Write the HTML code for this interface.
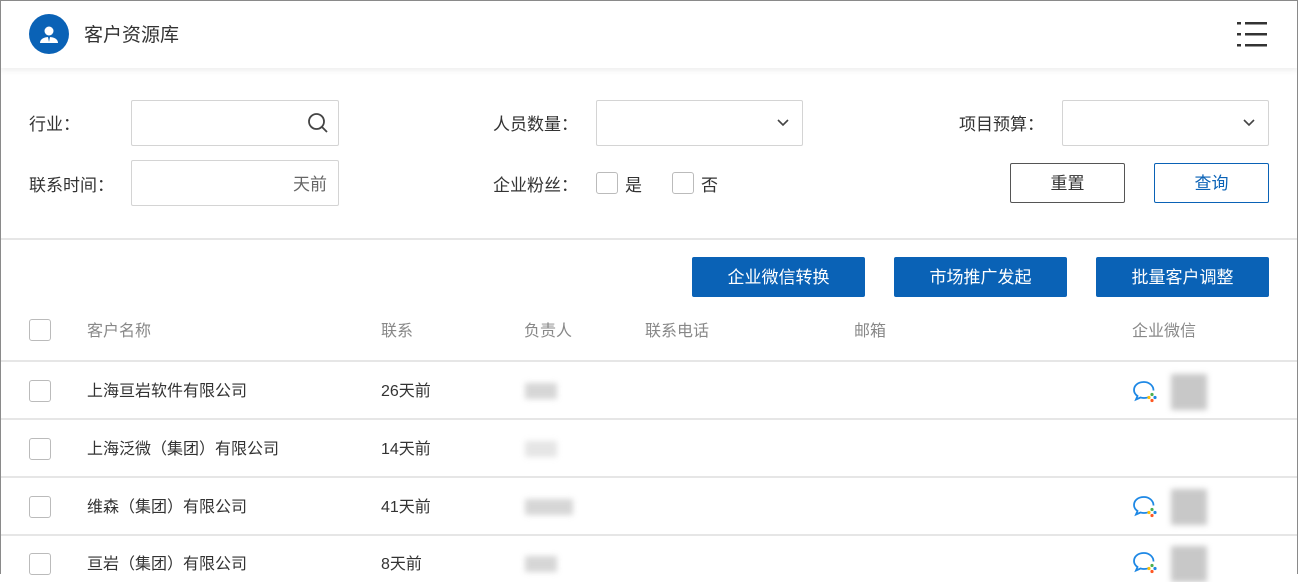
<!DOCTYPE html>
<html><head><meta charset="utf-8"><style>
*{box-sizing:border-box;margin:0;padding:0}
body{width:1298px;height:574px;overflow:hidden;background:#fff;font-family:"Liberation Sans","Noto Sans CJK SC",sans-serif;color:#333;position:relative}
.frame{position:absolute;left:0;top:0;width:1298px;height:574px;border:1px solid #8a8a8a;border-bottom:none;pointer-events:none;z-index:9}
.a{position:absolute;white-space:nowrap}
.hdr{position:absolute;left:0;top:0;width:1298px;height:68px;background:#fff;box-shadow:0 2px 6px rgba(0,0,0,.08)}
.lbl{font-size:17px;color:#333;line-height:20px}
.inp{position:absolute;border:1px solid #d4d4d4;border-radius:2px;background:#fff;height:46px}
.cb{position:absolute;width:22px;height:22px;border:1px solid #bbb;border-radius:3px;background:#fff}
.btn{position:absolute;background:#0a62b6;color:#fff;font-size:17px;text-align:center;line-height:42px;height:40px;border-radius:2px}
.th{font-size:16px;color:#888;line-height:20px}
.td{font-size:16px;color:#333;line-height:20px}
.hl{position:absolute;left:0;width:1298px;height:2px;background:#e6e6e6}
.blur{position:absolute;height:16px;background:#ccc;filter:blur(3px);opacity:.8}
.qr{position:absolute;width:36px;height:36px;background:#c8c8c8;filter:blur(3px)}
</style></head><body>
<div class="frame"></div>
<div class="hdr">
 <svg class="a" style="left:29px;top:14px" width="40" height="40" viewBox="0 0 40 40"><circle cx="20" cy="20" r="20" fill="#0a62b6"/><circle cx="20" cy="17" r="4.5" fill="#fff"/><path d="M11 29c0-4 4-6 9-6s9 2 9 6z" fill="#fff"/><path d="M19 23l1 5 1-5z" fill="#0a62b6"/></svg>
 <div class="a" style="left:84px;top:25px;font-size:19px;line-height:22px;color:#333">客户资源库</div>
 <svg class="a" style="left:1237px;top:21px" width="30" height="26" viewBox="0 0 30 26"><g fill="#333"><rect x="0" y="1" width="4" height="2.5"/><rect x="8" y="1" width="22" height="2.5"/><rect x="0" y="12" width="4" height="2.5"/><rect x="8" y="12" width="22" height="2.5"/><rect x="0" y="23" width="4" height="2.5"/><rect x="8" y="23" width="22" height="2.5"/></g></svg>
</div>

<div class="a lbl" style="left:29px;top:115px">行业：</div>
<div class="inp" style="left:131px;top:100px;width:208px"><svg class="a" style="left:175px;top:11px" width="22" height="22" viewBox="0 0 22 22"><circle cx="9.5" cy="9.5" r="7.5" fill="none" stroke="#444" stroke-width="1.8"/><path d="M15 15l5 5" stroke="#444" stroke-width="1.8"/></svg></div>
<div class="a lbl" style="left:493px;top:115px">人员数量：</div>
<div class="inp" style="left:596px;top:100px;width:207px"><svg class="a" style="left:180px;top:18px" width="12" height="8" viewBox="0 0 12 8"><path d="M1 1l5 5 5-5" fill="none" stroke="#444" stroke-width="1.6"/></svg></div>
<div class="a lbl" style="left:959px;top:115px">项目预算：</div>
<div class="inp" style="left:1062px;top:100px;width:207px"><svg class="a" style="left:180px;top:18px" width="12" height="8" viewBox="0 0 12 8"><path d="M1 1l5 5 5-5" fill="none" stroke="#444" stroke-width="1.6"/></svg></div>

<div class="a lbl" style="left:29px;top:176px">联系时间：</div>
<div class="inp" style="left:131px;top:160px;width:208px"><div class="a" style="right:11px;top:14px;font-size:17px;line-height:20px;color:#666">天前</div></div>
<div class="a lbl" style="left:493px;top:176px">企业粉丝：</div>
<div class="cb" style="left:596px;top:172px"></div><div class="a lbl" style="left:625px;top:176px">是</div>
<div class="cb" style="left:672px;top:172px"></div><div class="a lbl" style="left:701px;top:176px">否</div>
<div class="a" style="left:1010px;top:163px;width:115px;height:40px;border:1px solid #555;border-radius:2px;text-align:center;line-height:40px;font-size:17px;color:#333">重置</div>
<div class="a" style="left:1154px;top:163px;width:115px;height:40px;border:1px solid #0a62b6;border-radius:2px;text-align:center;line-height:40px;font-size:17px;color:#0a62b6">查询</div>

<div class="hl" style="top:238px"></div>

<div class="btn" style="left:692px;top:257px;width:173px">企业微信转换</div>
<div class="btn" style="left:894px;top:257px;width:173px">市场推广发起</div>
<div class="btn" style="left:1096px;top:257px;width:173px">批量客户调整</div>

<div class="cb" style="left:29px;top:319px"></div>
<div class="a th" style="left:87px;top:322px">客户名称</div>
<div class="a th" style="left:381px;top:322px">联系</div>
<div class="a th" style="left:524px;top:322px">负责人</div>
<div class="a th" style="left:645px;top:322px">联系电话</div>
<div class="a th" style="left:854px;top:322px">邮箱</div>
<div class="a th" style="left:1132px;top:322px">企业微信</div>
<div class="hl" style="top:360px"></div>

<div class="cb" style="left:29px;top:380px"></div>
<div class="a td" style="left:87px;top:382px">上海亘岩软件有限公司</div>
<div class="a td" style="left:381px;top:382px">26天前</div>
<div class="blur" style="left:525px;top:383px;width:32px"></div>
<svg class="a" style="left:1132px;top:380px" width="28" height="24" viewBox="0 0 28 24"><path d="M12 2C6 2 2 5.5 2 10c0 2.5 1.3 4.5 3.5 6L4 19.5l4.5-2c1.1.3 2.3.5 3.5.5 2 0 4-.5 5.5-1.4M21.5 10.5C21.5 5.5 17 2 12 2" fill="none" stroke="#1e88e5" stroke-width="1.8"/><circle cx="20" cy="14.5" r="1.6" fill="#4caf50"/><circle cx="17" cy="17.5" r="1.6" fill="#ffc107"/><circle cx="20" cy="20.5" r="1.6" fill="#ff5722"/><circle cx="23" cy="17.5" r="1.6" fill="#1e88e5"/></svg>
<div class="qr" style="left:1171px;top:374px"></div>
<div class="hl" style="top:418px"></div>

<div class="cb" style="left:29px;top:438px"></div>
<div class="a td" style="left:87px;top:440px">上海泛微（集团）有限公司</div>
<div class="a td" style="left:381px;top:440px">14天前</div>
<div class="blur" style="left:525px;top:441px;width:32px;opacity:.5"></div>
<div class="hl" style="top:476px"></div>

<div class="cb" style="left:29px;top:496px"></div>
<div class="a td" style="left:87px;top:498px">维森（集团）有限公司</div>
<div class="a td" style="left:381px;top:498px">41天前</div>
<div class="blur" style="left:525px;top:499px;width:48px"></div>
<svg class="a" style="left:1132px;top:495px" width="28" height="24" viewBox="0 0 28 24"><path d="M12 2C6 2 2 5.5 2 10c0 2.5 1.3 4.5 3.5 6L4 19.5l4.5-2c1.1.3 2.3.5 3.5.5 2 0 4-.5 5.5-1.4M21.5 10.5C21.5 5.5 17 2 12 2" fill="none" stroke="#1e88e5" stroke-width="1.8"/><circle cx="20" cy="14.5" r="1.6" fill="#4caf50"/><circle cx="17" cy="17.5" r="1.6" fill="#ffc107"/><circle cx="20" cy="20.5" r="1.6" fill="#ff5722"/><circle cx="23" cy="17.5" r="1.6" fill="#1e88e5"/></svg>
<div class="qr" style="left:1171px;top:489px"></div>
<div class="hl" style="top:534px"></div>

<div class="cb" style="left:29px;top:553px"></div>
<div class="a td" style="left:87px;top:555px">亘岩（集团）有限公司</div>
<div class="a td" style="left:381px;top:555px">8天前</div>
<div class="blur" style="left:525px;top:556px;width:32px"></div>
<svg class="a" style="left:1132px;top:551px" width="28" height="24" viewBox="0 0 28 24"><path d="M12 2C6 2 2 5.5 2 10c0 2.5 1.3 4.5 3.5 6L4 19.5l4.5-2c1.1.3 2.3.5 3.5.5 2 0 4-.5 5.5-1.4M21.5 10.5C21.5 5.5 17 2 12 2" fill="none" stroke="#1e88e5" stroke-width="1.8"/><circle cx="20" cy="14.5" r="1.6" fill="#4caf50"/><circle cx="17" cy="17.5" r="1.6" fill="#ffc107"/><circle cx="20" cy="20.5" r="1.6" fill="#ff5722"/><circle cx="23" cy="17.5" r="1.6" fill="#1e88e5"/></svg>
<div class="qr" style="left:1171px;top:546px"></div>
</body></html>
